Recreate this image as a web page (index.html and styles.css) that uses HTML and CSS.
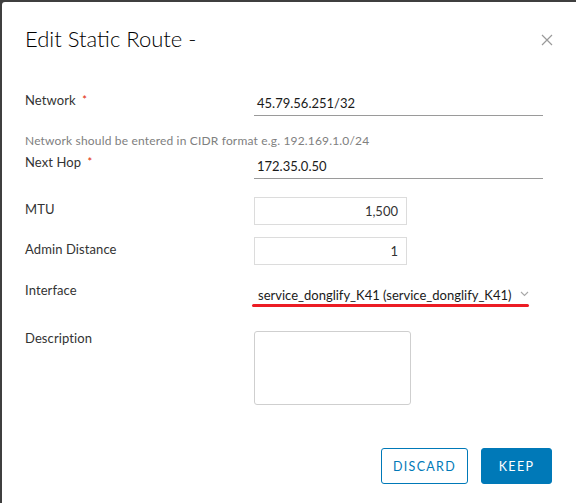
FILE: index.html
```html
<!DOCTYPE html>
<html>
<head>
<meta charset="utf-8">
<link rel="stylesheet" href="styles.css">
</head>
<body>
<div class="modal">
  <div class="header">
    <h1 class="title">Edit Static Route -</h1>
    <svg class="close" width="12" height="12" viewBox="0 0 12 12"><path d="M1 1 L11 11 M11 1 L1 11" stroke="#9a9a9a" stroke-width="1.2" fill="none"/></svg>
  </div>
  <div class="form">
    <div class="row row-network">
      <div class="label">Network <span class="req">*</span></div>
      <div class="line-input">45.79.56.251/32</div>
    </div>
    <div class="hint">Network should be entered in CIDR format e.g. 192.169.1.0/24</div>
    <div class="row row-hop">
      <div class="label">Next Hop <span class="req">*</span></div>
      <div class="line-input hop-input">172.35.0.50</div>
    </div>
    <div class="row row-box first-box">
      <div class="label label-box">MTU</div>
      <div class="box-input">1,500</div>
    </div>
    <div class="row row-box second-box">
      <div class="label label-box">Admin Distance</div>
      <div class="box-input">1</div>
    </div>
    <div class="row row-iface">
      <div class="label">Interface</div>
      <div class="select-wrap">
        <div class="select">
          <span class="select-text">service_donglify_K41 (service_donglify_K41)</span>
          <svg class="chev" width="9" height="6" viewBox="0 0 9 6"><path d="M1 1 L4.5 4.5 L8 1" stroke="#a8a8a8" stroke-width="1.1" fill="none"/></svg>
        </div>
        <div class="redline"></div>
      </div>
    </div>
    <div class="row row-desc">
      <div class="label">Description</div>
      <div class="textarea"></div>
    </div>
  </div>
  <div class="footer">
    <button class="btn btn-outline">DISCARD</button>
    <button class="btn btn-primary">KEEP</button>
  </div>
</div>
</body>
</html>
```
FILE: styles.css
```css
html, body {
  margin: 0;
  padding: 0;
  background: #3f3f3f;
  height: 100%;
}
body {
  padding: 2px 0 0 2px;
  box-sizing: border-box;
  overflow: hidden;
  font-family: "Lato", "Liberation Sans", sans-serif;
}
.modal {
  background: #fff;
  border-top-left-radius: 3px;
  height: 100%;
  padding: 0 24px 0 23px;
  box-sizing: border-box;
}
.header {
  display: flex;
  align-items: center;
  justify-content: space-between;
  padding-top: 24px;
  height: 26px;
}
.title {
  margin: 0;
  font-size: 22px;
  font-weight: 300;
  color: #000;
  line-height: 26px;
}
.close {
  margin-right: -1px;
  margin-top: 2px;
}
.form {
  padding-top: 38px;
}
.row {
  display: flex;
  align-items: flex-start;
}
.label {
  width: 229px;
  flex: none;
  font-size: 13px;
  line-height: 20px;
  color: #333;
  letter-spacing: 0.1px;
}
.req {
  color: #e12200;
  font-size: 11px;
  margin-left: 3px;
  vertical-align: 1px;
}
.line-input {
  width: 286px;
  height: 25px;
  border-bottom: 1px solid #9a9a9a;
  font-size: 13px;
  line-height: 26px;
  padding-left: 3px;
  box-sizing: content-box;
  color: #1a1a1a;
}
.hint {
  margin-top: 15px;
  font-size: 12px;
  line-height: 20px;
  color: #808080;
  letter-spacing: 0.17px;
}
.row-hop {
  margin-top: 1px;
}
.hop-input {
  margin-top: 1px;
}
.row-box {
  margin-top: 18px;
}
.second-box {
  margin-top: 12px;
}
.label-box {
  line-height: 24px;
}
.box-input {
  height: 26px;
  border: 1px solid #dcdcdc;
  font-size: 13px;
  line-height: 26px;
  text-align: right;
  padding-right: 8px;
  box-sizing: content-box;
  color: #333;
  width: 143px;
}
.row-iface {
  margin-top: 15px;
}
.select-wrap {
  margin-left: -2px;
  margin-top: 3px;
}
.select {
  display: flex;
  align-items: center;
  height: 24px;
  padding-left: 6px;
}
.select-text {
  font-size: 13px;
  color: #1a1a1a;
}
.chev {
  margin-left: 8px;
  margin-top: -2px;
}
.redline {
  width: 277px;
  height: 3px;
  border-radius: 2px;
  background: #ec1c24;
  margin-top: -3px;
}
.row-desc {
  margin-top: 21px;
}
.textarea {
  margin-top: 3px;
  width: 155px;
  height: 72px;
  border: 1px solid #cfcfcf;
  border-radius: 3px;
}
.footer {
  display: flex;
  justify-content: flex-end;
  gap: 13px;
  margin-top: 43px;
}
.btn {
  height: 36px;
  border-radius: 3px;
  font-family: "Lato", "Liberation Sans", sans-serif;
  font-size: 12.5px;
  font-weight: 400;
  letter-spacing: 1.3px;
  padding: 0;
  cursor: pointer;
}
.btn-outline {
  width: 87px;
  background: #fff;
  border: 1px solid #0079b8;
  color: #0079b8;
}
.btn-primary {
  width: 71px;
  background: #0079b8;
  border: 1px solid #0079b8;
  color: #fff;
}
```
